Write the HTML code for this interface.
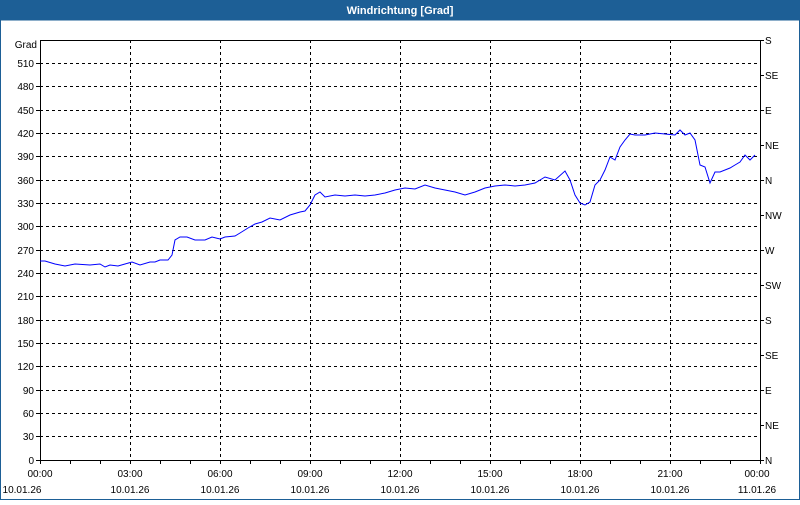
<!DOCTYPE html>
<html><head><meta charset="utf-8"><style>
body{margin:0;width:800px;height:500px;overflow:hidden;background:#fff;font-family:"Liberation Sans",sans-serif}
</style></head><body>
<svg width="800" height="500" xmlns="http://www.w3.org/2000/svg" font-family="Liberation Sans, sans-serif" font-size="10">
<rect x="0" y="0" width="800" height="500" fill="#fff"/>
<rect x="0" y="0" width="800" height="20" fill="#1d5f96"/>
<rect x="0.5" y="20" width="799" height="479.5" fill="none" stroke="#1d5f96"/>
<text x="400" y="14" fill="#fff" font-weight="bold" font-size="11" text-anchor="middle">Windrichtung [Grad]</text>
<g stroke="#000" stroke-dasharray="3,3" stroke-width="1">
<path d="M40 63.5H760M40 86.5H760M40 110.5H760M40 133.5H760M40 156.5H760M40 180.5H760M40 203.5H760M40 226.5H760M40 250.5H760M40 273.5H760M40 296.5H760M40 320.5H760M40 343.5H760M40 366.5H760M40 390.5H760M40 413.5H760M40 436.5H760"/>
<path d="M130.5 40V460M220.5 40V460M310.5 40V460M400.5 40V460M490.5 40V460M580.5 40V460M670.5 40V460"/>
</g>
<rect x="40.5" y="40.5" width="720" height="420" fill="none" stroke="#000"/>
<g stroke="#000">
<path d="M36 63.5h4M36 86.5h4M36 110.5h4M36 133.5h4M36 156.5h4M36 180.5h4M36 203.5h4M36 226.5h4M36 250.5h4M36 273.5h4M36 296.5h4M36 320.5h4M36 343.5h4M36 366.5h4M36 390.5h4M36 413.5h4M36 436.5h4M36 460.5h4"/>
<path d="M760 40.5h4M760 75.5h4M760 110.5h4M760 145.5h4M760 180.5h4M760 215.5h4M760 250.5h4M760 285.5h4M760 320.5h4M760 355.5h4M760 390.5h4M760 425.5h4M760 460.5h4"/>
<path d="M40.5 460v4M70.5 460v4M100.5 460v4M130.5 460v4M160.5 460v4M190.5 460v4M220.5 460v4M250.5 460v4M280.5 460v4M310.5 460v4M340.5 460v4M370.5 460v4M400.5 460v4M430.5 460v4M460.5 460v4M490.5 460v4M520.5 460v4M550.5 460v4M580.5 460v4M610.5 460v4M640.5 460v4M670.5 460v4M700.5 460v4M730.5 460v4M760.5 460v4"/>
</g>
<g text-anchor="end" fill="#000">
<text x="37" y="48">Grad</text>
<text x="34" y="67">510</text><text x="34" y="90">480</text><text x="34" y="114">450</text><text x="34" y="137">420</text><text x="34" y="160">390</text><text x="34" y="184">360</text><text x="34" y="207">330</text><text x="34" y="230">300</text><text x="34" y="254">270</text><text x="34" y="277">240</text><text x="34" y="300">210</text><text x="34" y="324">180</text><text x="34" y="347">150</text><text x="34" y="370">120</text><text x="34" y="394">90</text><text x="34" y="417">60</text><text x="34" y="440">30</text><text x="34" y="464">0</text>
</g>
<g fill="#000">
<text x="765" y="44">S</text><text x="765" y="79">SE</text><text x="765" y="114">E</text><text x="765" y="149">NE</text><text x="765" y="184">N</text><text x="765" y="219">NW</text><text x="765" y="254">W</text><text x="765" y="289">SW</text><text x="765" y="324">S</text><text x="765" y="359">SE</text><text x="765" y="394">E</text><text x="765" y="429">NE</text><text x="765" y="464">N</text>
</g>
<g text-anchor="middle" fill="#000">
<text x="40" y="477">00:00</text><text x="130" y="477">03:00</text><text x="220" y="477">06:00</text><text x="310" y="477">09:00</text><text x="400" y="477">12:00</text><text x="490" y="477">15:00</text><text x="580" y="477">18:00</text><text x="670" y="477">21:00</text><text x="757" y="477">00:00</text>
<text x="22" y="493">10.01.26</text><text x="130" y="493">10.01.26</text><text x="220" y="493">10.01.26</text><text x="310" y="493">10.01.26</text><text x="400" y="493">10.01.26</text><text x="490" y="493">10.01.26</text><text x="580" y="493">10.01.26</text><text x="670" y="493">10.01.26</text><text x="757" y="493">11.01.26</text>
</g>
<polyline fill="none" stroke="#0000ff" stroke-width="1" points="40,261 45,261 55,264 65,266 75,264 90,265 100,264 105,267 110,265 118,266 125,264 132,262 140,265 150,262 155,262 160,260 168,260 172,255 175,240 180,237 187,237 195,240 205,240 212,237 220,239 225,237 235,236 240,233 248,228 255,224 262,222 270,218 280,220 290,215 300,212 305,211 310,205 315,195 320,192 325,197 335,195 345,196 355,195 365,196 375,195 385,193 395,190 405,188 415,189 425,185 435,188 445,190 455,192 465,195 475,192 485,188 495,186 505,185 515,186 525,185 535,183 545,177 555,180 565,171 570,180 575,195 580,203 585,205 590,202 595,185 600,180 605,170 610,157 615,160 620,147 625,140 630,134 635,135 645,135 655,133 665,134 675,135 680,130 685,135 690,133 695,140 700,165 705,167 710,183 715,172 720,172 730,168 735,165 740,162 745,155 750,160 755,155"/>
</svg>
</body></html>
